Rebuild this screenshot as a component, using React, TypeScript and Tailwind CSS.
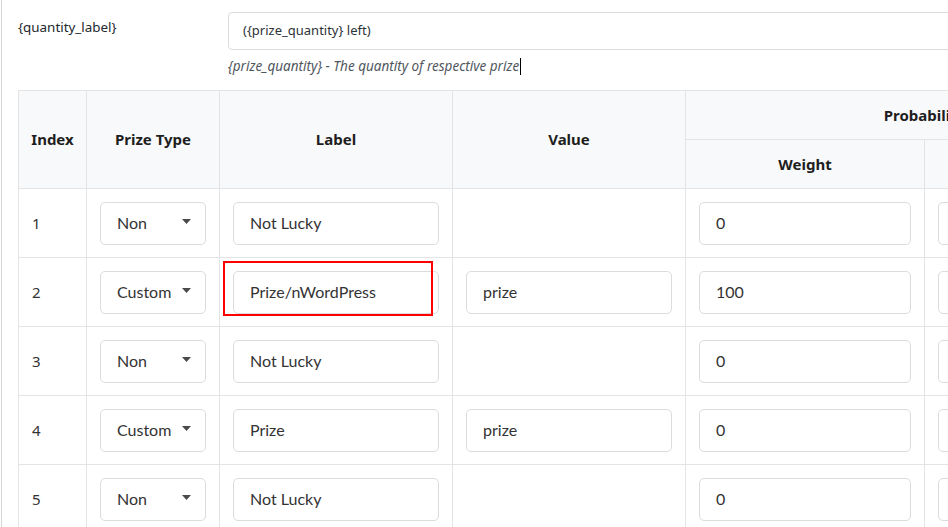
import React from "react";

type PrizeRow = {
  index: number;
  type: string;
  label: string;
  value: string | null;
  weight: string;
};

const rows: PrizeRow[] = [
  { index: 1, type: "Non", label: "Not Lucky", value: null, weight: "0" },
  { index: 2, type: "Custom", label: "Prize/nWordPress", value: "prize", weight: "100" },
  { index: 3, type: "Non", label: "Not Lucky", value: null, weight: "0" },
  { index: 4, type: "Custom", label: "Prize", value: "prize", weight: "0" },
  { index: 5, type: "Non", label: "Not Lucky", value: null, weight: "0" },
];

const sans = "font-['Segoe_UI','Noto_Sans',sans-serif]";
const lato = "font-['Lato',sans-serif]";

const Field = ({ value }: { value: string }) => (
  <div
    className={`h-[43px] w-full rounded-[5px] border border-[#dcdcdc] bg-white pl-[16px] flex items-center text-[16px] text-[#333] ${lato}`}
  >
    {value}
  </div>
);

const TypeSelect = ({ value }: { value: string }) => (
  <div
    className={`h-[43px] w-full rounded-[5px] border border-[#dcdcdc] bg-white pl-[16px] pr-[14px] flex items-center justify-between text-[16px] text-[#333] ${lato}`}
  >
    <span>{value}</span>
    <svg width="9" height="5" viewBox="0 0 9 5" className="-mt-[4px]">
      <path d="M0 0h9L4.5 5z" fill="#4a4a4a" />
    </svg>
  </div>
);

const cell = "border border-[#e4e4e4] px-[13px] align-middle";
const head = "border border-[#e4e4e4] bg-[#f8f9fa] text-[15px] font-bold text-[#1e1e1e] text-center align-middle";

export default function App() {
  return (
    <div className="h-[527px] w-[948px] overflow-hidden bg-white">
      <div className={`ml-[1px] h-full border-l border-[#d6d6d6] pl-[16px] pt-[12px] ${sans}`}>
        <div className="flex">
          <div className="w-[210px] shrink-0 pt-[5px] text-[13.4px] leading-[20px] text-[#23282d]">
            {"{quantity_label}"}
          </div>
          <div className="flex-1 min-w-0">
            <div className="h-[38px] w-[760px] rounded-[4px] border border-[#dcdcdc] bg-white pl-[14px] flex items-center text-[13px] text-[#2c3338]">
              {"({prize_quantity} left)"}
            </div>
            <div className="mt-[6px] flex items-center text-[13.5px] italic leading-[20px] text-[#50575e]">
              <span>{"{prize_quantity} - The quantity of respective prize"}</span>
              <span className="ml-[1px] inline-block h-[17px] w-[1px] bg-black" />
            </div>
          </div>
        </div>

        <table className="mt-[14px] w-[1145px] table-fixed border-collapse rounded-tl-[4px]">
          <colgroup>
            <col className="w-[68px]" />
            <col className="w-[133px]" />
            <col className="w-[233px]" />
            <col className="w-[233px]" />
            <col className="w-[239px]" />
            <col className="w-[239px]" />
          </colgroup>
          <thead>
            <tr className="h-[49px]">
              <th rowSpan={2} className={head}>Index</th>
              <th rowSpan={2} className={head}>Prize Type</th>
              <th rowSpan={2} className={head}>Label</th>
              <th rowSpan={2} className={head}>Value</th>
              <th colSpan={2} className={head}>Probability</th>
            </tr>
            <tr className="h-[49px]">
              <th className={head}>Weight</th>
              <th className={head}>Chance</th>
            </tr>
          </thead>
          <tbody>
            {rows.map((row) => (
              <tr key={row.index} className="h-[69px]">
                <td className={`${cell} text-[15px] text-[#333]`}>{row.index}</td>
                <td className={cell}>
                  <TypeSelect value={row.type} />
                </td>
                <td className={`${cell} relative`}>
                  <Field value={row.label} />
                  {row.index === 2 && (
                    <div className="absolute left-[3px] top-[3px] h-[55px] w-[210px] border-2 border-[#ff0000]" />
                  )}
                </td>
                <td className={cell}>{row.value !== null && <Field value={row.value} />}</td>
                <td className={cell}>
                  <Field value={row.weight} />
                </td>
                <td className={cell}>
                  <Field value="" />
                </td>
              </tr>
            ))}
          </tbody>
        </table>
      </div>
    </div>
  );
}
